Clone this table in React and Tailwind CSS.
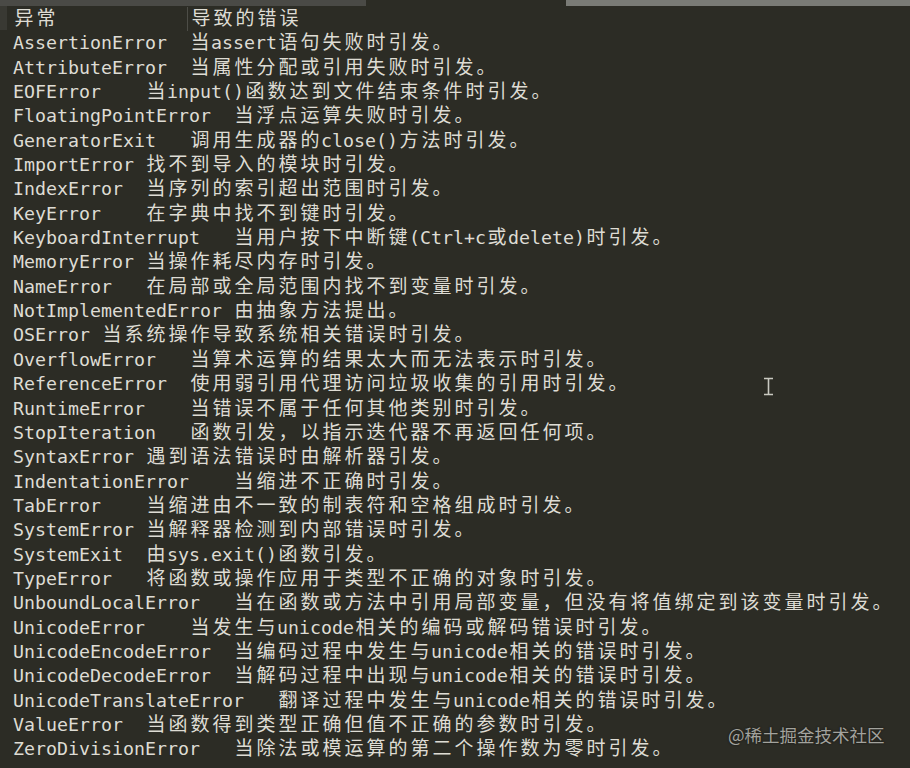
import React from "react";

const rows = [
  ["AssertionError", 2, "当assert语句失败时引发。"],
  ["AttributeError", 2, "当属性分配或引用失败时引发。"],
  ["EOFError", 4, "当input()函数达到文件结束条件时引发。"],
  ["FloatingPointError", 2, "当浮点运算失败时引发。"],
  ["GeneratorExit", 3, "调用生成器的close()方法时引发。"],
  ["ImportError", 1, "找不到导入的模块时引发。"],
  ["IndexError", 2, "当序列的索引超出范围时引发。"],
  ["KeyError", 4, "在字典中找不到键时引发。"],
  ["KeyboardInterrupt", 3, "当用户按下中断键(Ctrl+c或delete)时引发。"],
  ["MemoryError", 1, "当操作耗尽内存时引发。"],
  ["NameError", 3, "在局部或全局范围内找不到变量时引发。"],
  ["NotImplementedError", 1, "由抽象方法提出。"],
  ["OSError", 1, "当系统操作导致系统相关错误时引发。"],
  ["OverflowError", 3, "当算术运算的结果太大而无法表示时引发。"],
  ["ReferenceError", 2, "使用弱引用代理访问垃圾收集的引用时引发。"],
  ["RuntimeError", 4, "当错误不属于任何其他类别时引发。"],
  ["StopIteration", 3, "函数引发，以指示迭代器不再返回任何项。"],
  ["SyntaxError", 1, "遇到语法错误时由解析器引发。"],
  ["IndentationError", 4, "当缩进不正确时引发。"],
  ["TabError", 4, "当缩进由不一致的制表符和空格组成时引发。"],
  ["SystemError", 1, "当解释器检测到内部错误时引发。"],
  ["SystemExit", 2, "由sys.exit()函数引发。"],
  ["TypeError", 3, "将函数或操作应用于类型不正确的对象时引发。"],
  ["UnboundLocalError", 3, "当在函数或方法中引用局部变量，但没有将值绑定到该变量时引发。"],
  ["UnicodeError", 4, "当发生与unicode相关的编码或解码错误时引发。"],
  ["UnicodeEncodeError", 2, "当编码过程中发生与unicode相关的错误时引发。"],
  ["UnicodeDecodeError", 2, "当解码过程中出现与unicode相关的错误时引发。"],
  ["UnicodeTranslateError", 3, "翻译过程中发生与unicode相关的错误时引发。"],
  ["ValueError", 2, "当函数得到类型正确但值不正确的参数时引发。"],
  ["ZeroDivisionError", 3, "当除法或模运算的第二个操作数为零时引发。"],
];

function isWide(ch) {
  return ch.charCodeAt(0) >= 0x2e80;
}

function Mono({ text }) {
  const parts = [];
  let buf = "";
  let k = 0;
  for (const ch of text) {
    if (isWide(ch)) {
      if (buf) {
        parts.push(<span key={k++}>{buf}</span>);
        buf = "";
      }
      parts.push(
        <span
          key={k++}
          className="inline-block w-[22px] text-center text-[19px] leading-none align-baseline [font-family:'Noto_Sans_CJK_SC',sans-serif]"
        >
          {ch}
        </span>
      );
    } else {
      buf += ch;
    }
  }
  if (buf) parts.push(<span key={k++}>{buf}</span>);
  return parts;
}

function Line({ children }) {
  return (
    <div className="h-[24.35px] leading-[24.35px] whitespace-pre pl-[13px]">{children}</div>
  );
}

export default function App() {
  return (
    <div className="relative w-[910px] h-[768px] overflow-hidden bg-[#2c2c25] text-[#dedcd4] text-[18.27px] [font-family:'DejaVu_Sans_Mono','Noto_Sans_CJK_SC',monospace]">
      <div className="flex h-[6px]">
        <div className="w-[366px] bg-[#4a4a46]" />
        <div className="w-[200px] bg-[#2c2c25]" />
        <div className="flex-1 bg-[#7a7b76]" />
      </div>
      <div className="relative pt-[1px]">
        <div className="absolute left-0 top-0 w-[7px] h-[24px] bg-[#393933]" />
        <Line>
          <Mono text="异常" />
          {"            "}
          <span className="inline-block w-0 h-[24px] align-top border-l border-[#4d4d47] -ml-[2px] mr-[2px]" />
          <Mono text="导致的错误" />
        </Line>
        {rows.map(([name, sp, desc]) => (
          <Line key={name}>
            <Mono text={name + " ".repeat(sp) + desc} />
          </Line>
        ))}
      </div>

      <svg
        className="absolute left-[763px] top-[377px]"
        width="11"
        height="19"
        viewBox="0 0 11 19"
      >
        <path d="M1 1.5h9M5.5 1.5v16M1 17.5h9" stroke="#c9c9c1" strokeWidth="1.6" fill="none" />
      </svg>

      <div className="absolute left-[728px] top-[723px] text-[17.5px] leading-[24px] text-[#a3a39d] [text-shadow:0_0_2px_#111] [font-family:'Noto_Sans_CJK_SC',sans-serif]">
        @稀土掘金技术社区
      </div>
    </div>
  );
}
